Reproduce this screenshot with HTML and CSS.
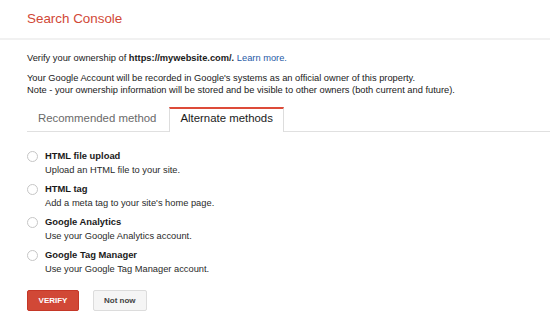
FILE: index.html
```html
<!DOCTYPE html>
<html lang="en">
<head>
    <meta charset="UTF-8">
    <meta name="viewport" content="width=device-width, initial-scale=1.0">
    <title>Search Console</title>
    <link rel="stylesheet" href="styles.css">
</head>
<body>
    <header class="topbar">
        <span class="brand">Search Console</span>
    </header>

    <main class="content">
        <p class="intro">Verify your ownership of <b>https://mywebsite.com/.</b> <a href="#" class="link">Learn more.</a></p>
        <p class="note">Your Google Account will be recorded in Google's systems as an official owner of this property.<br>Note - your ownership information will be stored and be visible to other owners (both current and future).</p>

        <div class="tabs">
            <div class="tab">Recommended method</div>
            <div class="tab tab-active">Alternate methods</div>
        </div>

        <ul class="methods">
            <li class="method">
                <span class="radio"></span>
                <div>
                    <div class="method-title">HTML file upload</div>
                    <div class="method-desc">Upload an HTML file to your site.</div>
                </div>
            </li>
            <li class="method">
                <span class="radio"></span>
                <div>
                    <div class="method-title">HTML tag</div>
                    <div class="method-desc">Add a meta tag to your site's home page.</div>
                </div>
            </li>
            <li class="method">
                <span class="radio"></span>
                <div>
                    <div class="method-title">Google Analytics</div>
                    <div class="method-desc">Use your Google Analytics account.</div>
                </div>
            </li>
            <li class="method">
                <span class="radio"></span>
                <div>
                    <div class="method-title">Google Tag Manager</div>
                    <div class="method-desc">Use your Google Tag Manager account.</div>
                </div>
            </li>
        </ul>

        <div class="actions">
            <button class="btn btn-primary">VERIFY</button>
            <button class="btn">Not now</button>
        </div>
    </main>
</body>
</html>
```

FILE: styles.css
```css
body {
    margin: 0;
    font-family: "Liberation Sans", Arial, sans-serif;
    color: #1a1a1a;
    background-color: #fff;
}
.topbar {
    height: 38px;
    padding-left: 27px;
    border-bottom: 2px solid #f1f1f1;
}
.brand {
    font-size: 13.4px;
    line-height: 37px;
    color: #d14836;
}
.content {
    padding-left: 27px;
    font-size: 9.3px;
    line-height: 12px;
}
.intro {
    margin: 12px 0 0;
}
.link {
    color: #1f5aa6;
    text-decoration: none;
}
.note {
    margin: 8px 0 0;
}
.tabs {
    display: flex;
    margin-top: 11px;
    border-bottom: 1px solid #e0e0e0;
}
.tab {
    margin-right: 2px;
    padding: 0 10px 4px;
    border: 1px solid transparent;
    border-top-width: 2px;
    border-bottom: none;
    font-size: 11.4px;
    line-height: 18px;
    color: #6a6a6a;
}
.tab-active {
    margin-bottom: -1px;
    padding-bottom: 5px;
    border-color: #ddd;
    border-top-color: #dd4b39;
    background-color: #fff;
    color: #1a1a1a;
}
.methods {
    list-style: none;
    margin: 17px 0 0;
    padding: 0;
}
.method {
    display: flex;
    gap: 7px;
    margin-bottom: 5px;
}
.method:last-child {
    margin-bottom: 0;
}
.radio {
    flex: none;
    width: 9px;
    height: 9px;
    margin-top: 2px;
    border: 1px solid #c6c6c6;
    border-radius: 50%;
}
.method-title {
    font-size: 9.4px;
    font-weight: bold;
    line-height: 14px;
}
.method-desc {
    line-height: 14px;
    color: #2a2a2a;
}
.actions {
    display: flex;
    gap: 14px;
    margin-top: 14px;
}
.btn {
    box-sizing: border-box;
    height: 21px;
    min-width: 52px;
    padding: 0 10px;
    border: 1px solid #dcdcdc;
    border-radius: 2px;
    background-color: #f5f5f5;
    font-family: "Liberation Sans", Arial, sans-serif;
    font-size: 8px;
    font-weight: bold;
    color: #444;
}
.btn-primary {
    border-color: #c53727;
    background-color: #d14836;
    color: #fff;
}
```
